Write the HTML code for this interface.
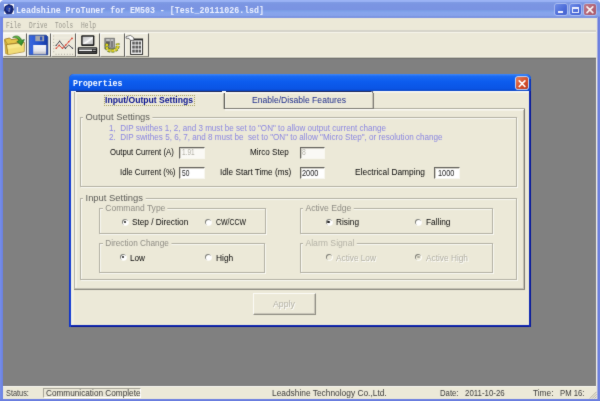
<!DOCTYPE html>
<html><head><meta charset="utf-8"><title>Leadshine ProTuner</title><style>
#w{position:absolute;left:0;top:0;width:600px;height:401px;overflow:hidden;filter:url(#pb);}
html,body{margin:0;padding:0;}
body{width:600px;height:401px;overflow:hidden;background:#808080;position:relative;font-family:"Liberation Sans",sans-serif;}
.b{position:absolute;}
.t{position:absolute;white-space:pre;transform-origin:0 50%;display:block;}
svg{display:block;overflow:visible;}
</style></head>
<body>
<svg width="0" height="0" style="position:absolute"><defs><filter id="pb" x="0" y="0" width="100%" height="100%" color-interpolation-filters="sRGB"><feConvolveMatrix order="3" kernelMatrix="0.2 0.85 0.2 0.85 8.0 0.85 0.2 0.85 0.2" edgeMode="duplicate" preserveAlpha="true"/></filter></defs></svg>
<div id="w">
<div class="b" style="left:0px;top:0px;width:600px;height:401px;background:#808080;"></div>
<div class="b" style="left:0px;top:0px;width:600px;height:18px;background:linear-gradient(#9cb4f5 0%,#98b0f3 9%,#7e9ae4 14%,#7b95e2 24%,#7a93e2 54%,#7a9fe8 60%,#87a4ec 70%,#86a2ea 87%,#7b95e2 92%,#7a93e0 100%);"></div>
<div class="b" style="left:0px;top:0px;width:600px;height:18px;background:radial-gradient(circle at 4px 4px, transparent 3.6px, #fff 4.4px) 0 0/4px 4px no-repeat, radial-gradient(circle at 0px 4px, transparent 3.6px, #fff 4.4px) 596px 0/4px 4px no-repeat;"></div>
<div class="b" style="left:2.7px;top:18px;width:593.8px;height:12px;background:#ece9d8;"></div>
<div class="b" style="left:2.7px;top:30px;width:593.8px;height:2px;background:#d6d4ca;"></div>
<div class="b" style="left:2.7px;top:32px;width:593.8px;height:1px;background:#f6f4ea;"></div>
<div class="b" style="left:2.7px;top:33px;width:593.8px;height:24px;background:#ece9d8;"></div>
<div class="b" style="left:2.7px;top:56px;width:593.8px;height:1px;background:#f1efe3;"></div>
<div class="b" style="left:2.7px;top:57px;width:593.8px;height:1px;background:#c6c4b6;"></div>
<div class="b" style="left:2.7px;top:58px;width:593.8px;height:1px;background:#6e6e6c;"></div>
<div class="b" style="left:0px;top:17px;width:2.7px;height:384px;background:linear-gradient(90deg,#768ee8,#6a80e2);"></div>
<div class="b" style="left:596px;top:18px;width:1px;height:381px;background:#ece9d8;"></div>
<div class="b" style="left:596px;top:59px;width:1px;height:327px;background:#f3f1e6;"></div>
<div class="b" style="left:597px;top:17px;width:3px;height:384px;background:linear-gradient(90deg,#a2abe2 0%,#a2abe2 33%,#6376d8 34%,#6c80e0 66%,#7288e6 100%);"></div>
<div class="b" style="left:0px;top:399px;width:600px;height:2px;background:linear-gradient(#6e82e2,#6a7ede);"></div>
<div class="b" style="left:2.7px;top:386px;width:593.6999999999999px;height:12.600000000000023px;background:#ece9d8;"></div>
<div class="b" style="left:2.7px;top:385.6px;width:593.6999999999999px;height:1.0px;background:#f8f7f0;"></div>
<div class="b" style="left:43px;top:388px;width:98px;height:10px;box-sizing:border-box;border-top:1px solid #a5a396;border-left:1px solid #a5a396;border-right:1px solid #fff;border-bottom:1px solid #fff;"></div>
<svg class="b" style="left:589px;top:391px" width="8" height="8" viewBox="0 0 8 8"><g stroke="#aaa799" stroke-width="0.9"><path d="M7.5 0.8 L0.8 7.5 M7.5 3.2 L3.2 7.5 M7.5 5.6 L5.6 7.5"/></g></svg>
<div class="b" style="left:4px;top:4px;width:10px;height:10px;background:#f4f6ff;"></div>
<svg class="b" style="left:3.8px;top:4px" width="10.4" height="10.4" viewBox="3.8 4 10.4 10.4"><path d="M8.6 4.5 L12.2 6 L13.2 9.6 L11.4 13.4 L6.6 13.8 L4.2 10.6 L4.8 6.6 Z" fill="#14267a" stroke="#0c1858" stroke-width="0.8" stroke-linejoin="round"/><circle cx="8.2" cy="8.6" r="2.6" fill="#2a48b0" opacity=".8"/><rect x="8.6" y="8" width="0.9" height="1.6" fill="#d8c890"/><rect x="8.2" y="10.6" width="1.4" height="0.9" fill="#dfe6ff"/></svg>
<div class="b" style="left:555.4px;top:4px;width:11.600000000000023px;height:11.4px;background:linear-gradient(135deg,#708ee8,#4c6bd8 60%,#4663d0);border-radius:2px;box-shadow:0 0 0 0.7px rgba(235,240,255,.55);"></div>
<div class="b" style="left:558.3px;top:11.2px;width:4.900000000000091px;height:2.0px;background:#f2f4ff;"></div>
<div class="b" style="left:569.6px;top:4px;width:11.600000000000023px;height:11.4px;background:linear-gradient(135deg,#708ee8,#4c6bd8 60%,#4663d0);border-radius:2px;box-shadow:0 0 0 0.7px rgba(235,240,255,.55);"></div>
<div class="b" style="left:572.4px;top:6.6px;width:6.2000000000000455px;height:6.200000000000001px;box-sizing:border-box;border:1px solid #eef1ff;border-top:2.2px solid #eef1ff;"></div>
<div class="b" style="left:583.8px;top:4px;width:11.800000000000068px;height:11.4px;background:linear-gradient(135deg,#c07a88,#b06072 60%,#a85a6a);border-radius:2px;box-shadow:0 0 0 0.7px rgba(235,240,255,.55);"></div>
<svg class="b" style="left:583.8px;top:4px" width="11.8" height="11.4" viewBox="0 0 11.8 11.4"><path d="M3 2.8 L8.8 8.6 M8.8 2.8 L3 8.6" stroke="#f6f2f4" stroke-width="1.7" stroke-linecap="round"/></svg>
<div class="b" style="left:3px;top:33px;width:24px;height:24px;background:#f4f2e8;box-sizing:border-box;border-top:1px solid #fbfaf6;border-left:1px solid #fdfcf8;border-right:1px solid #5c5b56;border-bottom:1px solid #8a887e;"></div><div class="b" style="left:27px;top:33px;width:24px;height:24px;background:#f4f2e8;box-sizing:border-box;border-top:1px solid #fbfaf6;border-left:1px solid #fdfcf8;border-right:1px solid #5c5b56;border-bottom:1px solid #8a887e;"></div><div class="b" style="left:51px;top:33px;width:25px;height:24px;background:#eeebdd;box-sizing:border-box;border-top:1px solid #fbfaf6;border-left:1px solid #fdfcf8;border-right:1px solid #5c5b56;border-bottom:1px solid #8a887e;"></div><div class="b" style="left:76px;top:33px;width:24px;height:24px;background:#eeebdd;box-sizing:border-box;border-top:1px solid #fbfaf6;border-left:1px solid #fdfcf8;border-right:1px solid #5c5b56;border-bottom:1px solid #8a887e;"></div><div class="b" style="left:100px;top:33px;width:25px;height:24px;background:#eeebdd;box-sizing:border-box;border-top:1px solid #fbfaf6;border-left:1px solid #fdfcf8;border-right:1px solid #5c5b56;border-bottom:1px solid #8a887e;"></div><div class="b" style="left:125px;top:33px;width:24px;height:24px;background:#eeebdd;box-sizing:border-box;border-top:1px solid #fbfaf6;border-left:1px solid #fdfcf8;border-right:1px solid #5c5b56;border-bottom:1px solid #8a887e;"></div><svg class="b" style="left:0;top:30px" width="152" height="30" viewBox="0 30 152 30">
<defs>
<filter id="bl" x="-10%" y="-10%" width="120%" height="120%"><feGaussianBlur stdDeviation="0.35"/></filter>
<linearGradient id="fl" x1="0" y1="0" x2="0" y2="1"><stop offset="0" stop-color="#f6f6fa"/><stop offset="0.6" stop-color="#e6e6ec"/><stop offset="1" stop-color="#b4b6c0"/></linearGradient>
<linearGradient id="fb" x1="0" y1="0" x2="1" y2="0"><stop offset="0" stop-color="#3c6ae0"/><stop offset="0.5" stop-color="#2452cc"/><stop offset="1" stop-color="#173aa4"/></linearGradient>
<linearGradient id="ga" x1="0" y1="0" x2="1" y2="1"><stop offset="0" stop-color="#7ad04a"/><stop offset="1" stop-color="#1f7a22"/></linearGradient>
<linearGradient id="sc" x1="0" y1="0" x2="1" y2="1"><stop offset="0" stop-color="#c4c4c4"/><stop offset="0.42" stop-color="#dcdcdc"/><stop offset="0.55" stop-color="#ffffff"/><stop offset="0.68" stop-color="#d4d4d4"/><stop offset="1" stop-color="#c0c0c0"/></linearGradient>
</defs>
<g filter="url(#bl)">
<!-- 1 folder -->
<path d="M4.6 39.2 L9.6 38 L11.2 39.6 L18.6 38.6 L18.8 42.6 L5.4 45 Z" fill="#e6c64c" stroke="#8a6414" stroke-width="0.7"/>
<path d="M4.8 40 L5.6 53.6 L8 54.4 L8.4 45.2 Z" fill="#d8b440" stroke="#9a7c22" stroke-width="0.5"/>
<path d="M6.4 44.6 L24.4 42.4 L24.2 51.6 L8.2 54.6 Z" fill="#f8e88c" stroke="#946c14" stroke-width="0.7"/>
<path d="M8 49 L24 46.4 L24.2 51.6 L8.2 54.6 Z" fill="#f0d870" opacity=".7"/>
<path d="M12.6 37.4 C15.4 35 20 35.4 21.6 40.2 L24.4 39.6 L21.4 45.6 L16.8 41.4 L19.2 40.8 C18 38 15.2 37.2 12.6 37.4 Z" fill="url(#ga)" stroke="#1a5a1a" stroke-width="0.6"/>
<!-- 2 floppy -->
<path d="M29.2 35.2 H46.2 L47.8 36.8 V54.8 H29.2 Z" fill="url(#fb)" stroke="#12307e" stroke-width="0.7"/>
<rect x="35.3" y="35.8" width="8.8" height="5.4" fill="#a4a6ac"/>
<rect x="40" y="36.6" width="2.3" height="3.8" fill="#2a50b8"/>
<rect x="33.2" y="45" width="13" height="9.3" fill="url(#fl)"/>
<!-- 3 chart -->
<g fill="#a09e94">
<rect x="53.2" y="35.6" width="1" height="0.8"/><rect x="53.2" y="38.8" width="1" height="0.8"/><rect x="53.2" y="42" width="1" height="0.8"/><rect x="53.2" y="45.2" width="1" height="0.8"/><rect x="53.2" y="48.4" width="1" height="0.8"/><rect x="53.2" y="51.4" width="1" height="0.8"/>
<rect x="55.6" y="53.8" width="0.9" height="1"/><rect x="58.4" y="53.8" width="0.9" height="1"/><rect x="61.2" y="53.8" width="0.9" height="1"/><rect x="64" y="53.8" width="0.9" height="1"/><rect x="66.8" y="53.8" width="0.9" height="1"/><rect x="69.6" y="53.8" width="0.9" height="1"/><rect x="72.2" y="53.8" width="0.9" height="1"/>
</g>
<g fill="#dcdad0"><rect x="55.5" y="35.7" width="17" height="0.5"/><rect x="55.5" y="38.9" width="17" height="0.5"/></g>
<polyline points="56.2,45.4 59.6,41.2 65.4,48.3 68.8,45 72.5,48.3" fill="none" stroke="#3c3c4c" stroke-width="0.9"/>
<polyline points="56.2,48.3 59.2,45.4 62.5,48.3 65.8,45 68.8,41.7 72,38.3" fill="none" stroke="#d8392a" stroke-width="0.9"/>
<g fill="#d8392a"><circle cx="56.2" cy="48.3" r="0.8"/><circle cx="59.2" cy="45.4" r="0.8"/><circle cx="62.5" cy="48.3" r="0.8"/><circle cx="65.8" cy="45" r="0.8"/><circle cx="68.8" cy="41.7" r="0.8"/><circle cx="72" cy="38.3" r="0.9"/></g>
<g fill="#3c3c4c"><circle cx="56.2" cy="45.4" r="0.7"/><circle cx="59.6" cy="41.2" r="0.7"/><circle cx="65.4" cy="48.3" r="0.7"/><circle cx="72.5" cy="48.3" r="0.7"/></g>
<!-- 4 computer -->
<rect x="81.2" y="35.3" width="13.2" height="10.8" rx="1" fill="#1c1c1c"/>
<rect x="82.6" y="36.7" width="10.4" height="7.6" fill="url(#sc)"/>
<rect x="77.8" y="47.2" width="19.4" height="6.9" rx="0.8" fill="#1a1a1a"/>
<rect x="78.8" y="48.2" width="17.4" height="0.8" fill="#8c8c8c"/>
<rect x="79" y="49.6" width="13" height="1.5" fill="#ffffff"/>
<rect x="92.6" y="49.8" width="3.2" height="1.1" fill="#b0b0b0"/>
<rect x="79" y="52.2" width="17" height="0.7" fill="#606060"/>
<!-- 5 server + gears -->
<rect x="104.8" y="38.1" width="9.8" height="10.8" fill="#8c8c8c" stroke="#5c5c5c" stroke-width="0.5"/>
<rect x="106.2" y="39.4" width="3.6" height="1.2" fill="#e8e8e8"/>
<rect x="110.6" y="39.2" width="2.8" height="7.8" fill="#c8c8c8"/>
<rect x="106" y="41.6" width="3.6" height="3" fill="#5a5a5a"/>
<rect x="111.4" y="41" width="1.2" height="6" fill="#4a4a4a"/>
<path d="M107 43.8 Q105.4 51.2 112 50.6 Q118.6 50.6 117.6 43.6" fill="none" stroke="#4c6814" stroke-width="3.8" stroke-dasharray="2.4 0.9"/>
<path d="M107 43.8 Q105.4 51.2 112 50.6 Q118.6 50.6 117.6 43.6" fill="none" stroke="#e4d424" stroke-width="2.4" stroke-dasharray="2.4 0.9"/>
<!-- 6 notebook -->
<rect x="130.6" y="39" width="12" height="15.4" fill="#fbfbfb" stroke="#1c1c1c" stroke-width="0.9"/>
<rect x="130.6" y="39" width="12" height="1.4" fill="#2a2a2a"/>
<g fill="#5c5c5c">
<rect x="132.2" y="41.6" width="2.6" height="3"/><rect x="135.4" y="41.6" width="2.6" height="3"/><rect x="138.6" y="41.6" width="2.4" height="3"/>
<rect x="132.2" y="45.6" width="2.6" height="3"/><rect x="135.4" y="45.6" width="2.6" height="3"/><rect x="138.6" y="45.6" width="2.4" height="3"/>
<rect x="132.2" y="49.6" width="2.6" height="3"/><rect x="135.4" y="49.6" width="2.6" height="3"/><rect x="138.6" y="49.6" width="2.4" height="3"/>
</g>
<path d="M126 36.6 L130.4 35.4 L133.6 37.6 L134 40.2 L130.6 40.4 L129 38.4 L126 38.2 Z" fill="#ffffff" stroke="#2a2a2a" stroke-width="0.6"/>
</g>
</svg>

<div class="b" style="left:68.8px;top:73.8px;width:462.40000000000003px;height:253.2px;background:#0a2cc4;border-radius:5px 5px 0 0;"></div>
<div class="b" style="left:68.8px;top:73.8px;width:462.40000000000003px;height:17.200000000000003px;background:linear-gradient(#4088f8 0%,#1a6af2 14%,#0c5cee 45%,#0a54e4 88%,#0a44c0 100%);border-radius:5px 5px 0 0;"></div>
<div class="b" style="left:71.39999999999999px;top:91px;width:457.5000000000001px;height:233.89999999999998px;background:#ece9d8;"></div>
<div class="b" style="left:68.8px;top:324.9px;width:462.40000000000003px;height:2.1000000000000227px;background:linear-gradient(#1a38c8,#08189a 60%);"></div>
<div class="b" style="left:528.9000000000001px;top:91px;width:2.2999999999999545px;height:236px;background:linear-gradient(90deg,#1a38c8,#08189a 60%);"></div>
<div class="b" style="left:68.8px;top:91px;width:2.5999999999999943px;height:236px;background:linear-gradient(90deg,#0a2cc4,#1a44d8);"></div>
<div class="b" style="left:528.9000000000001px;top:79px;width:2.2999999999999545px;height:12px;background:linear-gradient(90deg,#0c48d0,#0a2cb0);"></div>
<div class="b" style="left:515.6px;top:77.4px;width:12.199999999999932px;height:11.799999999999997px;background:linear-gradient(135deg,#e8805c,#d4502c 55%,#c23c1c);border-radius:2px;box-shadow:0 0 0 0.8px #f4f4f8;"></div>
<svg class="b" style="left:515.6px;top:77.6px" width="12.2" height="11.4" viewBox="0 0 12.2 11.4"><path d="M3.3 2.9 L8.9 8.5 M8.9 2.9 L3.3 8.5" stroke="#ffffff" stroke-width="1.7" stroke-linecap="round"/></svg>
<div class="b" style="left:71px;top:91px;width:6px;height:1px;background:#fdfcf8;"></div>
<div class="b" style="left:374px;top:91px;width:155px;height:1px;background:#fdfcf8;"></div>
<div class="b" style="left:374px;top:92px;width:155px;height:1px;background:#f2f0e4;"></div>
<div class="b" style="left:74px;top:92px;width:1px;height:197px;background:#b4b2a6;"></div>
<div class="b" style="left:75px;top:92px;width:1px;height:196px;background:#f7f5ec;"></div>
<div class="b" style="left:76px;top:93px;width:1px;height:195px;background:#f2f0e5;"></div>
<div class="b" style="left:71px;top:92px;width:3px;height:233px;background:#f2f0e3;"></div>
<div class="b" style="left:76px;top:91px;width:295px;height:1px;background:#1c2454;"></div>
<div class="b" style="left:371px;top:91px;width:2px;height:1px;background:#6a7090;"></div>
<div class="b" style="left:76px;top:92px;width:297px;height:1px;background:#fdfcf8;"></div>
<div class="b" style="left:76px;top:93px;width:296px;height:1px;background:#f3f1e6;"></div>
<div class="b" style="left:223px;top:93px;width:1px;height:16px;background:#7d7b73;opacity:.4;"></div>
<div class="b" style="left:224px;top:93px;width:1px;height:16px;background:#5e5d58;"></div>
<div class="b" style="left:222px;top:91px;width:4px;height:1px;background:#fdfcf8;"></div>
<div class="b" style="left:223px;top:92px;width:2px;height:1px;background:#fdfcf8;"></div>
<div class="b" style="left:225px;top:93px;width:1px;height:15px;background:#fdfcf8;opacity:.7;"></div>
<div class="b" style="left:373px;top:93px;width:1px;height:16px;background:#7d7b73;"></div>
<div class="b" style="left:372px;top:92px;width:1px;height:1px;background:#7d7b73;"></div>
<div class="b" style="left:372px;top:93px;width:1px;height:15px;background:#c4c1b4;"></div>
<div class="b" style="left:225px;top:108px;width:149px;height:1px;background:#7d7b73;"></div>
<div class="b" style="left:374px;top:108px;width:151px;height:1px;background:#adab9e;"></div>
<div class="b" style="left:225px;top:109px;width:299px;height:1px;background:#fdfcf8;"></div>
<div class="b" style="left:225px;top:110px;width:299px;height:1px;background:#f3f1e6;"></div>
<div class="b" style="left:524px;top:109px;width:1px;height:181px;background:#7d7b73;"></div>
<div class="b" style="left:523px;top:110px;width:1px;height:179px;background:#c4c1b4;"></div>
<div class="b" style="left:74px;top:289px;width:451px;height:1px;background:#8b897f;"></div>
<div class="b" style="left:75px;top:288px;width:449px;height:1px;background:#c4c1b4;"></div>
<div class="b" style="left:103.6px;top:95.2px;width:91.0px;height:11.200000000000003px;box-sizing:border-box;border:1px dotted #a8a05c;"></div>
<div class="b" style="left:81px;top:118px;width:437px;height:70px;border:1px solid #faf9f3;box-sizing:border-box;"></div><div class="b" style="left:80px;top:117px;width:437px;height:70px;border:1px solid #b3b1a4;box-sizing:border-box;"></div>
<div class="b" style="left:81px;top:199px;width:437px;height:82px;border:1px solid #faf9f3;box-sizing:border-box;"></div><div class="b" style="left:80px;top:198px;width:437px;height:82px;border:1px solid #b3b1a4;box-sizing:border-box;"></div>
<div class="b" style="left:100px;top:209px;width:167px;height:26px;border:1px solid #faf9f3;box-sizing:border-box;"></div><div class="b" style="left:99px;top:208px;width:167px;height:26px;border:1px solid #b3b1a4;box-sizing:border-box;"></div>
<div class="b" style="left:301px;top:209px;width:193px;height:26px;border:1px solid #faf9f3;box-sizing:border-box;"></div><div class="b" style="left:300px;top:208px;width:193px;height:26px;border:1px solid #b3b1a4;box-sizing:border-box;"></div>
<div class="b" style="left:100px;top:244px;width:166px;height:30px;border:1px solid #faf9f3;box-sizing:border-box;"></div><div class="b" style="left:99px;top:243px;width:166px;height:30px;border:1px solid #b3b1a4;box-sizing:border-box;"></div>
<div class="b" style="left:301px;top:244px;width:193px;height:30px;border:1px solid #faf9f3;box-sizing:border-box;"></div><div class="b" style="left:300px;top:243px;width:193px;height:30px;border:1px solid #b3b1a4;box-sizing:border-box;"></div>
<div class="b" style="left:179px;top:147px;width:26px;height:12px;background:#faf9f5;box-sizing:border-box;border-top:1px solid #62615b;border-left:1px solid #62615b;border-right:1px solid #f8f7f0;border-bottom:1px solid #f8f7f0;box-shadow:inset 1px 1px 0 #d2d0c6;"></div>
<div class="b" style="left:300px;top:147px;width:25px;height:12px;background:#faf9f5;box-sizing:border-box;border-top:1px solid #62615b;border-left:1px solid #62615b;border-right:1px solid #f8f7f0;border-bottom:1px solid #f8f7f0;box-shadow:inset 1px 1px 0 #d2d0c6;"></div>
<div class="b" style="left:179px;top:167px;width:26px;height:12px;background:#ffffff;box-sizing:border-box;border-top:1px solid #62615b;border-left:1px solid #62615b;border-right:1px solid #f8f7f0;border-bottom:1px solid #f8f7f0;box-shadow:inset 1px 1px 0 #d2d0c6;"></div>
<div class="b" style="left:300px;top:167px;width:25px;height:12px;background:#ffffff;box-sizing:border-box;border-top:1px solid #62615b;border-left:1px solid #62615b;border-right:1px solid #f8f7f0;border-bottom:1px solid #f8f7f0;box-shadow:inset 1px 1px 0 #d2d0c6;"></div>
<div class="b" style="left:434px;top:167px;width:26px;height:12px;background:#ffffff;box-sizing:border-box;border-top:1px solid #62615b;border-left:1px solid #62615b;border-right:1px solid #f8f7f0;border-bottom:1px solid #f8f7f0;box-shadow:inset 1px 1px 0 #d2d0c6;"></div>
<div class="b" style="left:121.8px;top:218.8px;width:6.0px;height:6.0px;border-radius:50%;background:#ffffff;box-shadow:inset 0.7px 0.7px 0 0.25px #7e7e76, 0.5px 0.5px 0 0.3px #ffffff;"></div><div class="b" style="left:123.5px;top:220.5px;width:2.6px;height:2.6px;border-radius:50%;background:#1c1c1c;"></div>
<div class="b" style="left:205.4px;top:218.8px;width:6.0px;height:6.0px;border-radius:50%;background:#ffffff;box-shadow:inset 0.7px 0.7px 0 0.25px #7e7e76, 0.5px 0.5px 0 0.3px #ffffff;"></div>
<div class="b" style="left:325.7px;top:218.8px;width:6.0px;height:6.0px;border-radius:50%;background:#ffffff;box-shadow:inset 0.7px 0.7px 0 0.25px #7e7e76, 0.5px 0.5px 0 0.3px #ffffff;"></div><div class="b" style="left:327.4px;top:220.5px;width:2.6px;height:2.6px;border-radius:50%;background:#1c1c1c;"></div>
<div class="b" style="left:415.4px;top:218.8px;width:6.0px;height:6.0px;border-radius:50%;background:#ffffff;box-shadow:inset 0.7px 0.7px 0 0.25px #7e7e76, 0.5px 0.5px 0 0.3px #ffffff;"></div>
<div class="b" style="left:119.9px;top:253.89999999999998px;width:6.0px;height:6.0px;border-radius:50%;background:#ffffff;box-shadow:inset 0.7px 0.7px 0 0.25px #7e7e76, 0.5px 0.5px 0 0.3px #ffffff;"></div><div class="b" style="left:121.60000000000001px;top:255.59999999999997px;width:2.6px;height:2.6px;border-radius:50%;background:#1c1c1c;"></div>
<div class="b" style="left:205.4px;top:254.0px;width:6.0px;height:6.0px;border-radius:50%;background:#ffffff;box-shadow:inset 0.7px 0.7px 0 0.25px #7e7e76, 0.5px 0.5px 0 0.3px #ffffff;"></div>
<div class="b" style="left:325.7px;top:254.0px;width:6.0px;height:6.0px;border-radius:50%;background:#ece9d8;box-shadow:inset 0.7px 0.7px 0 0.25px #7e7e76, 0.5px 0.5px 0 0.3px #ffffff;"></div>
<div class="b" style="left:415.4px;top:254.0px;width:6.0px;height:6.0px;border-radius:50%;background:#ece9d8;box-shadow:inset 0.7px 0.7px 0 0.25px #7e7e76, 0.5px 0.5px 0 0.3px #ffffff;"></div><div class="b" style="left:417.09999999999997px;top:255.7px;width:2.6px;height:2.6px;border-radius:50%;background:#b0aea2;"></div>
<div class="b" style="left:253px;top:293px;width:63px;height:22px;box-sizing:border-box;border-top:1px solid #fbfaf6;border-left:1px solid #fbfaf6;border-right:1px solid #8f8d83;border-bottom:1px solid #8f8d83;box-shadow:inset -1px -1px 0 #c9c6b9;"></div>
<span class="t" style="left:16px;top:5.94px;font:bold 9.5px/10.92px 'Liberation Mono', monospace;color:#eef2ff;transform:scaleX(0.8700);">Leadshine ProTuner for EM503 - [Test_20111026.lsd]</span>
<span class="t" style="left:6px;top:20.91px;font:normal 9.2px/10.58px 'Liberation Mono', monospace;color:#96948a;transform:scaleX(0.6799);">File</span>
<span class="t" style="left:28.6px;top:20.91px;font:normal 9.2px/10.58px 'Liberation Mono', monospace;color:#96948a;transform:scaleX(0.6672);">Drive</span>
<span class="t" style="left:55px;top:20.91px;font:normal 9.2px/10.58px 'Liberation Mono', monospace;color:#96948a;transform:scaleX(0.6527);">Tools</span>
<span class="t" style="left:81px;top:20.91px;font:normal 9.2px/10.58px 'Liberation Mono', monospace;color:#96948a;transform:scaleX(0.6799);">Help</span>
<span class="t" style="left:73px;top:80.06px;font:bold 8.6px/9.89px 'Liberation Mono', monospace;color:#ffffff;transform:scaleX(0.9597);">Properties</span>
<span class="t" style="left:105px;top:95.42px;font:bold 9px/10.35px 'Liberation Sans', sans-serif;color:#06108e;transform:scaleX(0.9567);">Input/Output Settings</span>
<span class="t" style="left:252px;top:95.03px;font:normal 9px/10.35px 'Liberation Sans', sans-serif;color:#1a2a8a;transform:scaleX(0.9537);">Enable/Disable Features</span>
<span class="t" style="left:85px;top:111.85px;font:normal 9.3px/10.7px 'Liberation Sans', sans-serif;color:#5c5c58;transform:scaleX(1.0063);background:#ece9d8;padding:0 2.5px;margin-left:-2.5px;">Output Settings</span>
<span class="t" style="left:109px;top:122.54px;font:normal 8.8px/10.12px 'Liberation Sans', sans-serif;color:#8a86e0;transform:scaleX(0.9160);">1,  DIP swithes 1, 2, and 3 must be set to &quot;ON&quot; to allow output current change</span>
<span class="t" style="left:109px;top:132.14px;font:normal 8.8px/10.12px 'Liberation Sans', sans-serif;color:#8a86e0;transform:scaleX(0.9214);">2.  DIP swithes 5, 6, 7, and 8 must be  set to &quot;ON&quot; to allow &quot;Micro Step&quot;, or resolution change</span>
<span class="t" style="left:110px;top:147.04px;font:normal 8.8px/10.12px 'Liberation Sans', sans-serif;color:#080808;transform:scaleX(0.8810);">Output Current (A)</span>
<span class="t" style="left:250px;top:147.04px;font:normal 8.8px/10.12px 'Liberation Sans', sans-serif;color:#080808;transform:scaleX(0.9216);">Mirco Step</span>
<span class="t" style="left:119.5px;top:167.14px;font:normal 8.8px/10.12px 'Liberation Sans', sans-serif;color:#080808;transform:scaleX(0.8938);">Idle Current (%)</span>
<span class="t" style="left:220px;top:167.14px;font:normal 8.8px/10.12px 'Liberation Sans', sans-serif;color:#080808;transform:scaleX(0.9283);">Idle Start Time (ms)</span>
<span class="t" style="left:355px;top:167.14px;font:normal 8.8px/10.12px 'Liberation Sans', sans-serif;color:#080808;transform:scaleX(0.9544);">Electrical Damping</span>
<span class="t" style="left:182px;top:148.27px;font:normal 8.4px/9.66px 'Liberation Sans', sans-serif;color:#b4b2a8;transform:scaleX(0.7724);">1.91</span>
<span class="t" style="left:302px;top:148.27px;font:normal 8.4px/9.66px 'Liberation Sans', sans-serif;color:#b4b2a8;transform:scaleX(0.8134);">8</span>
<span class="t" style="left:182.2px;top:168.04px;font:normal 8.8px/10.12px 'Liberation Sans', sans-serif;color:#181818;transform:scaleX(0.7553);">50</span>
<span class="t" style="left:302.4px;top:168.04px;font:normal 8.8px/10.12px 'Liberation Sans', sans-serif;color:#181818;transform:scaleX(0.8377);">2000</span>
<span class="t" style="left:437.6px;top:168.04px;font:normal 8.8px/10.12px 'Liberation Sans', sans-serif;color:#181818;transform:scaleX(0.8377);">1000</span>
<span class="t" style="left:85px;top:192.85px;font:normal 9.3px/10.7px 'Liberation Sans', sans-serif;color:#5c5c58;transform:scaleX(1.0113);background:#ece9d8;padding:0 2.5px;margin-left:-2.5px;">Input Settings</span>
<span class="t" style="left:105px;top:202.52px;font:normal 9px/10.35px 'Liberation Sans', sans-serif;color:#8e8c84;transform:scaleX(0.9467);background:#ece9d8;padding:0 2.5px;margin-left:-2.5px;">Command Type</span>
<span class="t" style="left:305px;top:202.52px;font:normal 9px/10.35px 'Liberation Sans', sans-serif;color:#8e8c84;transform:scaleX(0.9577);background:#ece9d8;padding:0 2.5px;margin-left:-2.5px;">Active Edge</span>
<span class="t" style="left:105.5px;top:238.02px;font:normal 9px/10.35px 'Liberation Sans', sans-serif;color:#8e8c84;transform:scaleX(0.9131);background:#ece9d8;padding:0 2.5px;margin-left:-2.5px;">Direction Change</span>
<span class="t" style="left:305px;top:238.02px;font:normal 9px/10.35px 'Liberation Sans', sans-serif;color:#b4b2a6;transform:scaleX(0.9602);background:#ece9d8;padding:0 2.5px;margin-left:-2.5px;">Alarm Signal</span>
<span class="t" style="left:131.75px;top:217.14px;font:normal 8.8px/10.12px 'Liberation Sans', sans-serif;color:#080808;transform:scaleX(0.9353);">Step / Direction</span>
<span class="t" style="left:216.25px;top:217.14px;font:normal 8.8px/10.12px 'Liberation Sans', sans-serif;color:#080808;transform:scaleX(0.7872);">CW/CCW</span>
<span class="t" style="left:336px;top:217.14px;font:normal 8.8px/10.12px 'Liberation Sans', sans-serif;color:#080808;transform:scaleX(0.9406);">Rising</span>
<span class="t" style="left:426.25px;top:217.14px;font:normal 8.8px/10.12px 'Liberation Sans', sans-serif;color:#080808;transform:scaleX(0.9451);">Falling</span>
<span class="t" style="left:129.5px;top:252.64px;font:normal 8.8px/10.12px 'Liberation Sans', sans-serif;color:#080808;transform:scaleX(0.9293);">Low</span>
<span class="t" style="left:215.75px;top:252.64px;font:normal 8.8px/10.12px 'Liberation Sans', sans-serif;color:#080808;transform:scaleX(0.9534);">High</span>
<span class="t" style="left:336px;top:252.64px;font:normal 8.8px/10.12px 'Liberation Sans', sans-serif;color:#b0aea2;transform:scaleX(0.9378);text-shadow:0.8px 0.8px 0 #fff;">Active Low</span>
<span class="t" style="left:426px;top:252.64px;font:normal 8.8px/10.12px 'Liberation Sans', sans-serif;color:#b0aea2;transform:scaleX(0.9438);text-shadow:0.8px 0.8px 0 #fff;">Active High</span>
<span class="t" style="left:273.3px;top:298.62px;font:normal 9px/10.35px 'Liberation Sans', sans-serif;color:#b2b0a4;transform:scaleX(0.9727);text-shadow:0.8px 0.8px 0 #fff;">Apply</span>
<span class="t" style="left:5.9px;top:389.06px;font:normal 8.6px/9.89px 'Liberation Sans', sans-serif;color:#3a3a3a;transform:scaleX(0.8556);">Status:</span>
<span class="t" style="left:46px;top:389.06px;font:normal 8.6px/9.89px 'Liberation Sans', sans-serif;color:#3a3a3a;transform:scaleX(0.9558);">Communication Complete</span>
<span class="t" style="left:272px;top:389.06px;font:normal 8.6px/9.89px 'Liberation Sans', sans-serif;color:#3a3a3a;transform:scaleX(0.9732);">Leadshine Technology Co.,Ltd.</span>
<span class="t" style="left:439.5px;top:389.06px;font:normal 8.6px/9.89px 'Liberation Sans', sans-serif;color:#3a3a3a;transform:scaleX(0.9004);">Date:</span>
<span class="t" style="left:464.8px;top:389.06px;font:normal 8.6px/9.89px 'Liberation Sans', sans-serif;color:#3a3a3a;transform:scaleX(0.9163);">2011-10-26</span>
<span class="t" style="left:532.5px;top:389.06px;font:normal 8.6px/9.89px 'Liberation Sans', sans-serif;color:#3a3a3a;transform:scaleX(0.9683);">Time:</span>
<span class="t" style="left:559.5px;top:389.06px;font:normal 8.6px/9.89px 'Liberation Sans', sans-serif;color:#3a3a3a;transform:scaleX(0.8996);">PM 16:</span>
</div>
</body></html>
